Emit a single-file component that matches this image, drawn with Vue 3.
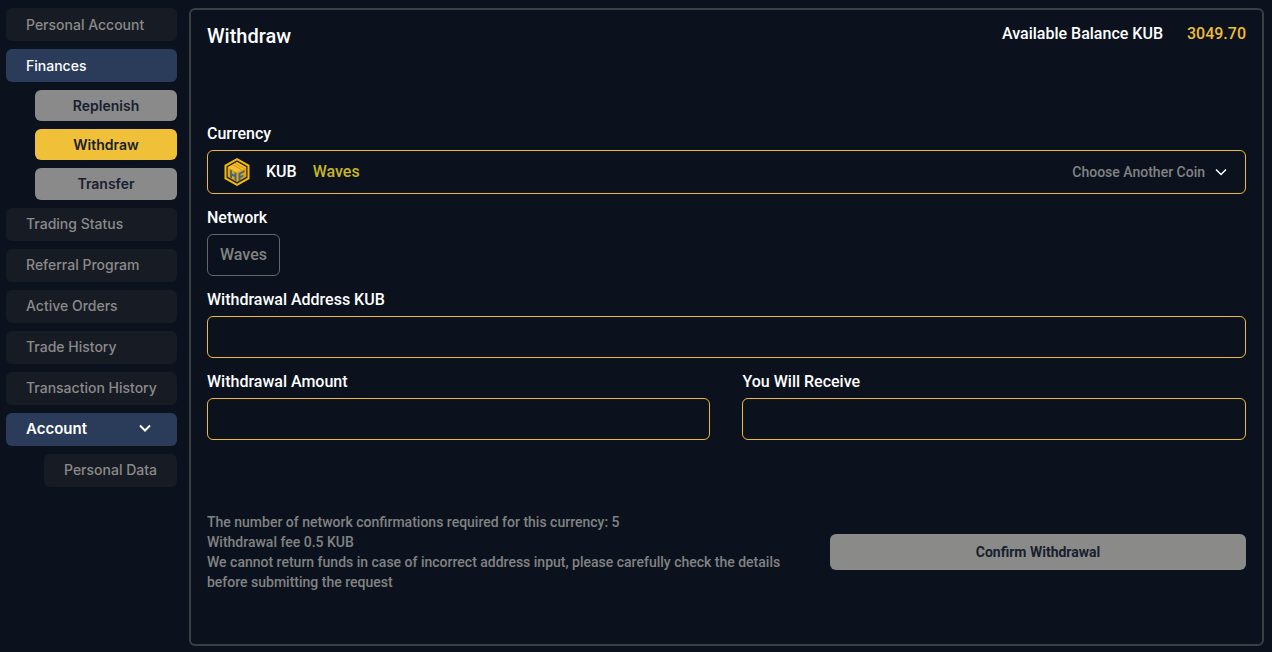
<template>
  <div class="page">
    <aside class="sidebar">
      <template v-for="item in menu" :key="item.label">
        <div class="nav-item" :class="{ active: item.active, large: item.chevron }">
          <span>{{ item.label }}</span>
          <svg v-if="item.chevron" class="nav-chevron" width="14" height="10" viewBox="0 0 14 10">
            <path d="M2 2.500 7 7.500 12 2.500" fill="none" stroke="#fff" stroke-width="2" />
          </svg>
        </div>
        <div
          v-for="sub in item.children"
          :key="sub.label"
          class="sub-item"
          :class="{ current: sub.current, tall: sub.tall }"
        >
          {{ sub.label }}
        </div>
        <div v-if="item.extra" class="nav-item extra">{{ item.extra }}</div>
      </template>
    </aside>

    <main class="panel">
      <header class="panel-head">
        <h1>Withdraw</h1>
        <div class="balance">
          <span>Available Balance KUB</span>
          <span class="balance-value">3049.70</span>
        </div>
      </header>

      <label class="label">Currency</label>
      <div class="field currency">
        <svg class="coin" width="26" height="28" viewBox="0 0 26 28">
          <path d="M13 1.200 24.500 7.600V20.400L13 26.800 1.500 20.400V7.600Z" fill="#2a2410" stroke="#f2b90f" stroke-width="2" />
          <path d="M13 4 22.300 9.200V18.800L13 24 3.700 18.800V9.200Z" fill="#e8a50f" />
          <path d="M13 4 22.300 9.200 13 14.200 3.700 9.200Z" fill="#f3c030" />
          <path d="M8.500 6.700 17.500 11.500M10.800 5.300 19.800 10.200" stroke="#c98f12" stroke-width="0.900" />
          <path d="M6 11.500 8 12.600V15.500L10.500 16.800V14L12.500 15V23L10.500 21.900V19L8 17.700V20.500L6 19.400Z" fill="#3d6a86" />
          <path d="M14.500 15.200 20.500 12V14.200L16.500 16.300V18L19.500 16.400V18.500L16.500 20.100V22.800L14.500 23.900Z" fill="#3d6a86" />
        </svg>
        <span class="coin-name">KUB</span>
        <span class="coin-network">Waves</span>
        <span class="choose">Choose Another Coin</span>
        <svg width="12" height="8" viewBox="0 0 12 8">
          <path d="M1 1.500 6 6.500 11 1.500" fill="none" stroke="#fff" stroke-width="1.500" />
        </svg>
      </div>

      <label class="label network-label">Network</label>
      <div class="network-chip">Waves</div>

      <label class="label address-label">Withdrawal Address KUB</label>
      <input class="field input" type="text" />

      <div class="amounts">
        <div class="amount">
          <label class="label">Withdrawal Amount</label>
          <input class="field input" type="text" />
        </div>
        <div class="amount receive">
          <label class="label">You Will Receive</label>
          <input class="field input" type="text" />
        </div>
      </div>

      <footer class="panel-foot">
        <div class="notes">
          <p>The number of network confirmations required for this currency: 5</p>
          <p>Withdrawal fee 0.5 KUB</p>
          <p>We cannot return funds in case of incorrect address input, please carefully check the details before submitting the request</p>
        </div>
        <button class="confirm" type="button">Confirm Withdrawal</button>
      </footer>
    </main>
  </div>
</template>

<script setup>
const menu = [
  { label: 'Personal Account' },
  {
    label: 'Finances',
    active: true,
    children: [
      { label: 'Replenish' },
      { label: 'Withdraw', current: true },
      { label: 'Transfer', tall: true },
    ],
  },
  { label: 'Trading Status' },
  { label: 'Referral Program' },
  { label: 'Active Orders' },
  { label: 'Trade History' },
  { label: 'Transaction History' },
  { label: 'Account', active: true, chevron: true, extra: 'Personal Data' },
]
</script>

<style>
html,
body {
  margin: 0;
  background: #0b121e;
}
</style>

<style scoped>
.page {
  display: flex;
  align-items: flex-start;
  gap: 12px;
  height: 652px;
  box-sizing: border-box;
  padding: 8px 8px 6px 6px;
  background: #0b121e;
  overflow: hidden;
  font-family: Roboto, sans-serif;
}

.sidebar {
  display: flex;
  flex-direction: column;
  gap: 8px;
  width: 171px;
  flex: none;
  font-family: Inter, sans-serif;
  font-size: 14px;
  font-weight: 500;
}

.nav-item {
  display: flex;
  align-items: center;
  justify-content: space-between;
  box-sizing: border-box;
  height: 33px;
  padding: 0 12px 0.5px 20px;
  border-radius: 6px;
  background: #171b23;
  color: #8a8a8a;
  white-space: nowrap;
}

.nav-item.active {
  background: #2a3c5a;
  color: #fff;
}

.nav-item.large {
  padding-right: 25px;
  padding-bottom: 1.5px;
  font-size: 15px;
  font-weight: 600;
}

.nav-item.extra {
  margin-left: 38px;
  justify-content: center;
  padding-left: 0;
  padding-right: 0;
}

.sub-item {
  display: flex;
  align-items: center;
  justify-content: center;
  height: 31px;
  margin-left: 29px;
  border-radius: 6px;
  background: #8a8a8a;
  color: #17202f;
  font-weight: 600;
}

.sub-item.tall {
  height: 31.5px;
}

.sub-item.current {
  background: #f0c038;
}

.panel {
  flex: 1;
  height: 638px;
  box-sizing: border-box;
  padding: 14px 16px 0;
  border: 2px solid #3b3e43;
  border-radius: 6px;
  color: #fff;
}

.panel-head {
  display: flex;
  justify-content: space-between;
  height: 100px;
}

.panel-head h1 {
  margin: 0;
  font-size: 20px;
  font-weight: 500;
  line-height: 24px;
}

.balance {
  display: flex;
  gap: 24px;
  font-size: 16px;
  font-weight: 500;
  line-height: 19px;
}

.balance-value {
  color: #efbb35;
}

.label {
  display: block;
  font-size: 16px;
  font-weight: 500;
  line-height: 19px;
}

.field {
  display: block;
  width: 100%;
  box-sizing: border-box;
  border: 1px solid #efbb35;
  border-radius: 6px;
  background: transparent;
}

.currency {
  display: flex;
  align-items: center;
  height: 44px;
  margin-top: 7px;
  padding: 0 18px 0 16px;
}

.coin-name {
  margin-left: 16px;
  margin-top: -2px;
  font-size: 16px;
  font-weight: 500;
}

.coin-network {
  margin-left: 16px;
  margin-top: -2px;
  color: #c9b622;
  font-size: 16px;
  font-weight: 500;
}

.choose {
  margin-left: auto;
  margin-right: 10px;
  color: #828282;
  font-size: 14px;
  font-weight: 500;
}

.network-label {
  margin-top: 14px;
}

.network-chip {
  display: flex;
  align-items: center;
  justify-content: center;
  width: 73px;
  height: 42px;
  box-sizing: border-box;
  margin-top: 7px;
  padding-bottom: 2px;
  border: 1px solid #666;
  border-radius: 6px;
  color: #828282;
  font-size: 16px;
  font-weight: 500;
}

.address-label {
  margin-top: 14px;
}

.input {
  height: 42px;
  margin-top: 7px;
  padding: 0 12px;
  outline: none;
  color: #fff;
}

.amounts {
  display: flex;
  gap: 32px;
  margin-top: 14px;
}

.amount {
  flex: none;
  width: 503px;
}

.amount.receive {
  width: 504px;
}

.amount.receive .label {
  padding-left: 0.5px;
}

.panel-foot {
  display: flex;
  justify-content: space-between;
  align-items: center;
  margin-top: 72px;
}

.notes {
  width: 590px;
  color: #828282;
  font-size: 14px;
  font-weight: 500;
  line-height: 20px;
}

.notes p {
  margin: 0;
}

.confirm {
  width: 416px;
  height: 36px;
  border: 0;
  border-radius: 6px;
  background: #8a8a88;
  color: #17202f;
  font-family: Roboto, sans-serif;
  font-size: 14px;
  font-weight: 700;
}
</style>
